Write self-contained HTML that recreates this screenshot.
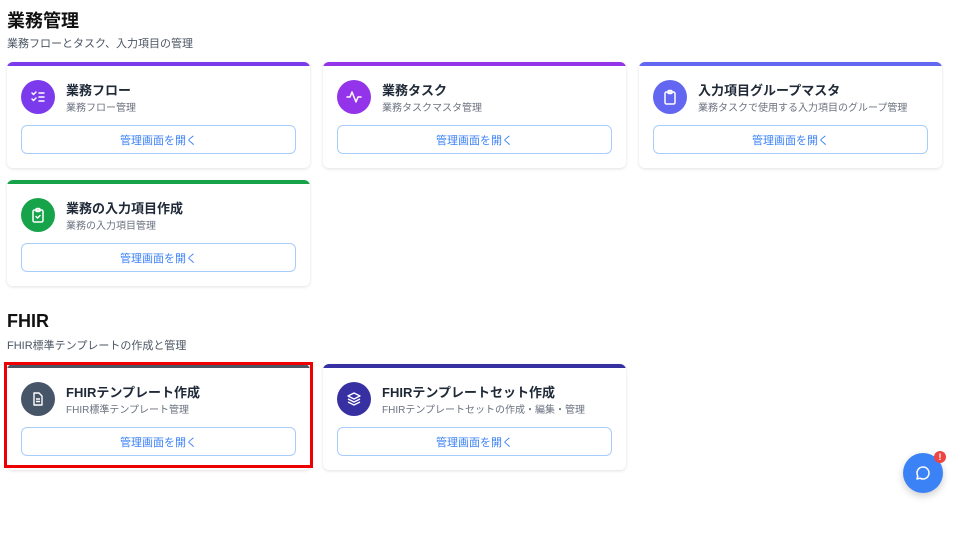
<!DOCTYPE html>
<html><head><meta charset="utf-8"><style>
*{box-sizing:border-box;margin:0;padding:0}
body{width:960px;height:540px;background:#fff;font-family:"Liberation Sans","Noto Sans CJK JP",sans-serif;position:relative;overflow:hidden;color:#111827}
.h{position:absolute;left:7px;font-size:18px;font-weight:bold;color:#111}
.s{position:absolute;left:7px;font-size:11px;color:#4b5563}
.card{position:absolute;width:303px;height:106px;background:#fff;border-radius:6px;box-shadow:0 1px 3px rgba(0,0,0,.12);overflow:hidden}
.bar{position:absolute;left:0;top:0;right:0;height:4px}
.ic{position:absolute;left:14px;top:18px;width:34px;height:34px;border-radius:50%;display:flex;align-items:center;justify-content:center}
.t{position:absolute;left:59px;top:18px;font-size:13px;font-weight:bold;color:#1f2937}
.st{position:absolute;left:59px;top:37px;font-size:10px;color:#6b7280}
.btn{position:absolute;left:14px;top:63px;width:275px;height:29px;border:1px solid #a9cdfb;border-radius:6px;display:flex;align-items:center;justify-content:center;font-size:11px;color:#3b82f6}
svg{display:block}
</style></head><body>
<div class="h" style="top:7px">業務管理</div>
<div class="s" style="top:35px">業務フローとタスク、入力項目の管理</div>

<div class="card" style="left:7px;top:62px"><div class="bar" style="background:#7c3aed"></div>
<div class="ic" style="background:#7c3aed"><svg width="16" height="16" viewBox="0 0 16 16" fill="none" stroke="#fff" stroke-width="1.5" stroke-linecap="round"><path d="M2 4l1.5 1.5L6 3M2 10l1.5 1.5L6 9M9 4h5M9 8h5M9 12h5"/></svg></div>
<div class="t">業務フロー</div><div class="st">業務フロー管理</div><div class="btn">管理画面を開く</div></div>

<div class="card" style="left:323px;top:62px"><div class="bar" style="background:#9333ea"></div>
<div class="ic" style="background:#9333ea"><svg width="16" height="16" viewBox="0 0 16 16" fill="none" stroke="#fff" stroke-width="1.5" stroke-linecap="round" stroke-linejoin="round"><path d="M1 8h3l2-5 4 10 2-5h3"/></svg></div>
<div class="t">業務タスク</div><div class="st">業務タスクマスタ管理</div><div class="btn">管理画面を開く</div></div>

<div class="card" style="left:639px;top:62px"><div class="bar" style="background:#6366f1"></div>
<div class="ic" style="background:#6366f1"><svg width="16" height="16" viewBox="0 0 16 16" fill="none" stroke="#fff" stroke-width="1.5" stroke-linejoin="round"><rect x="3" y="3" width="10" height="12" rx="1.5"/><rect x="6" y="1.5" width="4" height="3" rx="1"/></svg></div>
<div class="t">入力項目グループマスタ</div><div class="st">業務タスクで使用する入力項目のグループ管理</div><div class="btn">管理画面を開く</div></div>

<div class="card" style="left:7px;top:180px"><div class="bar" style="background:#16a34a"></div>
<div class="ic" style="background:#16a34a"><svg width="16" height="16" viewBox="0 0 16 16" fill="none" stroke="#fff" stroke-width="1.5" stroke-linejoin="round" stroke-linecap="round"><rect x="3" y="3" width="10" height="12" rx="1.5"/><rect x="6" y="1.5" width="4" height="3" rx="1"/><path d="M6 9.5l1.5 1.5L10 8.5"/></svg></div>
<div class="t">業務の入力項目作成</div><div class="st">業務の入力項目管理</div><div class="btn">管理画面を開く</div></div>

<div class="h" style="top:311px">FHIR</div>
<div class="s" style="top:337px">FHIR標準テンプレートの作成と管理</div>

<div class="card" style="left:7px;top:364px"><div class="bar" style="background:#4b5563"></div>
<div class="ic" style="background:#475569"><svg width="16" height="16" viewBox="0 0 16 16" fill="none" stroke="#fff" stroke-width="1.4" stroke-linejoin="round"><path d="M4 2h5l3 3v9H4z"/><path d="M6 8h4M6 10.5h4"/></svg></div>
<div class="t">FHIRテンプレート作成</div><div class="st">FHIR標準テンプレート管理</div><div class="btn">管理画面を開く</div></div>
<div style="position:absolute;left:4px;top:362px;width:309px;height:106px;border:3px solid #ee0000"></div>

<div class="card" style="left:323px;top:364px"><div class="bar" style="background:#3730a3"></div>
<div class="ic" style="background:#3730a3"><svg width="16" height="16" viewBox="0 0 16 16" fill="none" stroke="#fff" stroke-width="1.4" stroke-linejoin="round"><path d="M8 2l6 3-6 3-6-3z"/><path d="M2 8l6 3 6-3M2 11l6 3 6-3"/></svg></div>
<div class="t">FHIRテンプレートセット作成</div><div class="st">FHIRテンプレートセットの作成・編集・管理</div><div class="btn">管理画面を開く</div></div>

<div style="position:absolute;left:903px;top:453px;width:40px;height:40px;border-radius:50%;background:#3b82f6;box-shadow:0 3px 8px rgba(0,0,0,.2);display:flex;align-items:center;justify-content:center"><svg width="18" height="18" viewBox="0 0 18 18" fill="none" stroke="#fff" stroke-width="1.5" stroke-linejoin="round"><path d="M9 3a6 6 0 1 1-3 11.2L3 15l.8-3A6 6 0 0 1 9 3z"/></svg></div>
<div style="position:absolute;left:934px;top:451px;width:12px;height:12px;border-radius:50%;background:#ef4444;color:#fff;font-size:9px;font-weight:bold;text-align:center;line-height:12px">!</div>
</body></html>
